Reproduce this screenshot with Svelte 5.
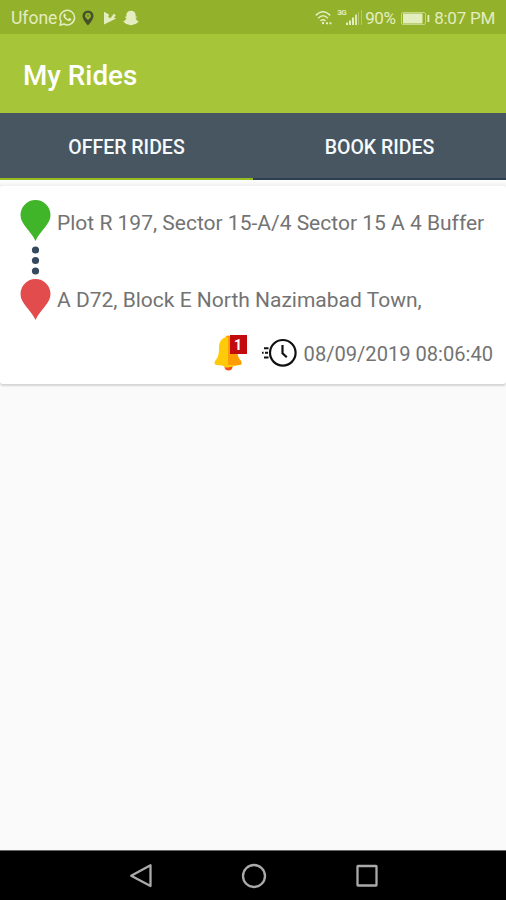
<script>
  let activeTab = "offer";

  const tabs = [
    { id: "offer", label: "OFFER RIDES" },
    { id: "book", label: "BOOK RIDES" }
  ];

  const rides = [
    {
      from: "Plot R 197, Sector 15-A/4 Sector 15 A 4 Buffer",
      to: "A D72, Block E North Nazimabad Town,",
      date: "08/09/2019 08:06:40",
      requests: 1
    }
  ];
</script>

<div class="screen">
  <div class="status-bar">
    <span class="carrier">Ufone</span>
    <svg class="whatsapp" width="18" height="18" viewBox="0 0 18 18">
      <path d="M2 16.2l1.1-3.7A7.3 7.3 0 1 1 5.8 15z" fill="none" stroke="currentColor" stroke-width="1.5" stroke-linejoin="round" />
      <path d="M6.2 4.9c.5-.5 1-.3 1.2.2l.5 1.2c.1.3 0 .5-.6 1.2.7 1.3 1.6 2.1 2.9 2.7l.9-1c.2-.2.4-.2.7-.1l1.2.7c.4.2.4.4.2.9-.5 1.3-2 1.6-3.2 1.1-2-.7-3.7-2.2-4.5-4.2-.4-1-.1-2 .7-2.7z" fill="currentColor" />
    </svg>
    <svg class="place" width="12" height="16" viewBox="0 0 12 16">
      <path fill-rule="evenodd" d="M6 .5A5.5 5.5 0 0 0 .5 6C.5 9.7 6 15.5 6 15.5S11.5 9.7 11.5 6A5.5 5.5 0 0 0 6 .5zM6 2.8a3 3 0 0 1 1.5 5.6L6 10 4.5 8.4A3 3 0 0 1 6 2.8z" fill="#46512c" />
      <circle cx="6" cy="5.7" r="1.1" fill="#6f8030" />
    </svg>
    <svg class="play" width="14" height="14" viewBox="0 0 14 14">
      <path d="M1 .8l5 2.600-.8 2.600 2.200 1.300 3.400-4.600 2 1.300-1.800 2.700 2.200.9L1 13.500z" fill="currentColor" />
    </svg>
    <svg class="snap" width="16" height="16" viewBox="0 0 16 16">
      <path d="M8 .8c2.900 0 4.600 1.900 4.600 4.300v1.600l1.100-.2.300.8-1.400 1c.5 1.600 1.500 2.500 3 3-.1 1-.9 1.400-1.900 1.600l-.6 1.100c-1.900-.2-2.900 1.200-5.100 1.200s-3.200-1.400-5.100-1.200l-.6-1.100c-1-.2-1.800-.6-1.900-1.600 1.500-.5 2.500-1.400 3-3l-1.400-1 .3-.8 1.100.2V5.100C3.400 2.700 5.100.8 8 .8z" fill="currentColor" />
    </svg>

    <div class="right">
      <svg class="wifi" width="18" height="16" viewBox="0 0 18 16" fill="none" stroke="currentColor" stroke-width="1.5">
        <path d="M.8 5.4Q8 -1.8 15.2 5.4M3.1 8.2Q8 3.4 12.9 8.2M5.5 11Q8 8.5 10.5 11" />
        <circle cx="8" cy="13" r="1.2" fill="currentColor" stroke="none" />
        <path d="M11 13.3h2M14.5 13.3h2" stroke-width="2" />
      </svg>
      <span class="network">3G</span>
      <svg class="signal" width="17" height="16" viewBox="0 0 17 16">
        <path d="M0 12.5h2V15H0zM3 10.5h2V15H3zM6 7.5h2V15H6z" fill="currentColor" />
        <path d="M9 4.5h2V15H9z" fill="currentColor" opacity="0.9" />
        <path d="M12 2h1v13h-1zM15 0h1v15h-1z" fill="currentColor" opacity="0.4" />
      </svg>
      <span class="percent">90%</span>
      <svg class="battery" width="29" height="13" viewBox="0 0 29 13">
        <rect x="0.5" y="0.5" width="24" height="12" rx="1.5" fill="none" stroke="currentColor" opacity="0.6" />
        <rect x="2" y="1.5" width="19.5" height="10" fill="currentColor" />
        <rect x="26.5" y="3" width="1.8" height="7" fill="currentColor" />
      </svg>
      <span class="clock">8:07 PM</span>
    </div>
  </div>

  <header>
    <h1>My Rides</h1>
  </header>

  <div class="tabs">
    {#each tabs as tab}
      <button class:active={activeTab === tab.id} on:click={() => (activeTab = tab.id)}>
        <span>{tab.label}</span>
      </button>
    {/each}
  </div>

  <main>
    {#each rides as ride}
      <div class="card">
        <div class="route">
          <svg class="track" width="32" height="122" viewBox="0 0 32 122">
            <path d="M15.5 0A15 15 0 0 1 30.5 15C30.5 24.5 20.5 30 15.5 41C10.5 30 .5 24.5 .5 15A15 15 0 0 1 15.5 0z" fill="#41b52a" />
            <circle cx="15.5" cy="50" r="3.6" fill="#34495e" />
            <circle cx="15.5" cy="60.5" r="3.6" fill="#34495e" />
            <circle cx="15.5" cy="71" r="3.6" fill="#34495e" />
            <path d="M15.5 79A15 15 0 0 1 30.5 94C30.5 103.5 20.5 109 15.5 120C10.5 109 .5 103.5 .5 94A15 15 0 0 1 15.5 79z" fill="#e34c4c" />
          </svg>
          <div class="stops">
            <p class="from">{ride.from}</p>
            <p class="to">{ride.to}</p>
          </div>
        </div>
        <div class="meta">
          <div class="bell">
            <svg width="34" height="36" viewBox="0 0 34 36">
              <circle cx="14.5" cy="31.5" r="4" fill="#f4511e" />
              <circle cx="14" cy="3" r="2.5" fill="#ff9800" />
              <path d="M14 2C7.5 2 5 7 5 13c0 6-1 10-4 13-1 2-.5 4 1.5 4l6 .5 3 2h2.500l11.500-2.500c2 0 2.500-2 1.500-4-3-3-4-7-4-13 0-6-2.500-11-9-11z" fill="#ffca0a" />
              <path d="M14 2c6.500 0 9 5 9 11 0 6 1 10 4 13 1 2 .5 4-1.500 4H14z" fill="#ff9d00" />
            </svg>
            <span class="badge">{ride.requests}</span>
          </div>
          <svg class="time-icon" width="36" height="30" viewBox="0 0 36 30" fill="none" stroke="#111">
            <circle cx="21.8" cy="14.8" r="12.8" stroke-width="2.2" />
            <path d="M21.5 7v8.3l4.3 4" stroke-width="2.2" />
            <path d="M3 10.2h4.500M1 14.800h1.600M4 14.800h3M3 19.400h4.500" stroke-width="2" />
          </svg>
          <span class="date">{ride.date}</span>
        </div>
      </div>
    {/each}
  </main>

  <nav>
    <svg width="24" height="26" viewBox="0 0 24 26">
      <path d="M21.5 2.3v20.8L2.2 12.7z" />
    </svg>
    <svg width="26" height="26" viewBox="0 0 26 26">
      <circle cx="13" cy="13" r="11" />
    </svg>
    <svg width="24" height="26" viewBox="0 0 24 26">
      <rect x="2.5" y="3" width="19" height="19.5" rx="0.5" />
    </svg>
  </nav>
</div>

<style>
  :global(body) {
    margin: 0;
  }

  .screen {
    display: flex;
    flex-direction: column;
    width: 506px;
    height: 900px;
    overflow: hidden;
    background: #fafafa;
    font-family: Roboto, "Liberation Sans", sans-serif;
  }

  svg {
    display: block;
    flex: none;
  }

  /* Status bar */
  .status-bar {
    display: flex;
    align-items: center;
    box-sizing: border-box;
    height: 34px;
    padding: 2px 11px 0;
    background: #93b12a;
    color: #e4edc0;
    font-size: 17px;
    line-height: 32px;
    white-space: nowrap;
  }
  .carrier {
    width: 47px;
    font-size: 17.5px;
  }
  .place {
    margin-left: 6px;
  }
  .play {
    margin-left: 9px;
  }
  .snap {
    margin-left: 6px;
  }
  .right {
    display: flex;
    align-items: center;
    margin-left: auto;
  }
  .network {
    align-self: flex-start;
    width: 9px;
    margin: 6px 0 0 4px;
    font-size: 8px;
    font-weight: 700;
    line-height: 10px;
    letter-spacing: -0.5px;
  }
  .percent {
    width: 31px;
    margin-left: 2px;
    letter-spacing: -0.4px;
  }
  .battery {
    margin: 0 4px 0 5px;
  }
  .clock {
    letter-spacing: -0.25px;
  }

  /* App bar */
  header {
    display: flex;
    align-items: center;
    height: 79px;
    padding: 0 23px;
    background: #a7c539;
  }
  h1 {
    margin: 3px 0 0;
    color: #fff;
    font-size: 27.8px;
    font-weight: 500;
  }

  /* Tabs */
  .tabs {
    display: flex;
    height: 67px;
    background: #485661;
  }
  .tabs button {
    flex: 1;
    padding: 4px 0 0;
    border: none;
    border-bottom: 2px solid #2b3f51;
    background: none;
    color: #f5fafd;
    font: 500 19.5px Roboto, sans-serif;
  }
  .tabs button.active {
    border-bottom-color: #97bc22;
  }

  /* Rides */
  main {
    flex: 1;
    padding-top: 6px;
    background: linear-gradient(#fff, #f1f1f1 6px, #fafafa 7px);
  }
  .card {
    box-sizing: border-box;
    height: 198px;
    padding: 14px 13px 0 20px;
    border-radius: 3px;
    background: #fff;
    box-shadow: 0 2px 2px #d4d4d4;
    color: #737373;
  }
  .route {
    display: flex;
  }
  .stops {
    margin-left: 5px;
    white-space: nowrap;
  }
  .stops p {
    margin: 0;
    font-size: 21px;
    line-height: 24px;
  }
  .stops .from {
    margin-top: 11px;
  }
  .stops .to {
    margin-top: 53px;
  }
  .meta {
    display: flex;
    justify-content: flex-end;
    align-items: center;
    height: 36px;
    margin-top: 13px;
  }
  .bell {
    position: relative;
    width: 34px;
    margin-right: 13px;
  }
  .badge {
    position: absolute;
    top: 0;
    right: 1px;
    width: 17px;
    height: 19px;
    background: #c30b0e;
    color: #fff;
    font-size: 14px;
    font-weight: 700;
    line-height: 20px;
    text-align: center;
  }
  .date {
    margin-left: 7px;
    font-size: 20.1px;
    line-height: 26px;
    padding-top: 1px;
  }

  /* Navigation bar */
  nav {
    display: flex;
    justify-content: center;
    align-items: center;
    gap: 88px;
    box-sizing: border-box;
    height: 50px;
    padding-left: 1px;
    border-top: 1px solid #666;
    background: #000;
  }
  nav svg {
    fill: none;
    stroke: #aaa;
    stroke-width: 2.3;
    stroke-linejoin: round;
  }
</style>
